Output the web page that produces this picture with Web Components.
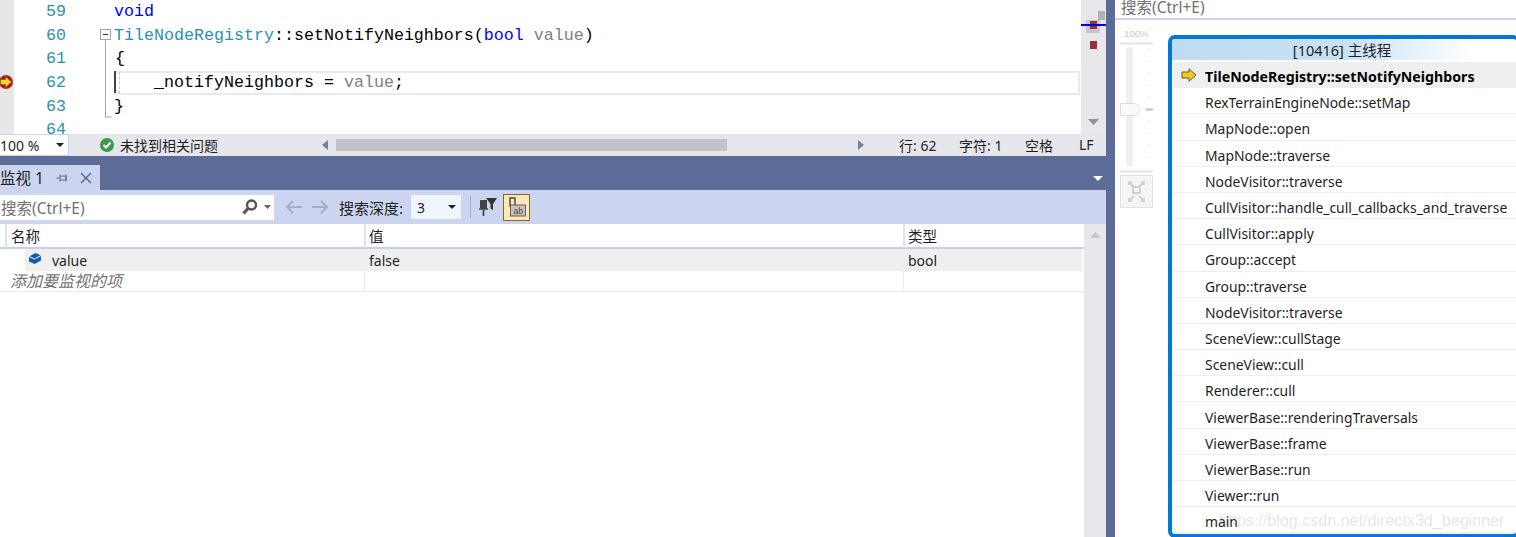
<!DOCTYPE html>
<html lang="zh"><head><meta charset="utf-8"><title>VS</title>
<style>
html,body{margin:0;padding:0;width:1516px;height:537px;overflow:hidden;background:#fff;font:14px "Noto Sans","Noto Sans CJK SC",sans-serif;color:#1e1e1e}
</style></head><body>
<vs-app></vs-app>
<script>
const def=(name,html)=>customElements.define(name,class extends HTMLElement{constructor(){super();this.attachShadow({mode:'open'}).innerHTML=html}});
const UI='"Noto Sans","Noto Sans CJK SC",sans-serif';

def('vs-editor',`<style>
:host{display:flex;height:134px;overflow:hidden;background:#fff;position:relative}
.bp{width:14px;background:#e6e7e8;flex:none;display:grid;grid-template-rows:repeat(6,23.7px)}
.bp svg{grid-row:4;margin:3px 0 0 -1px}
.nums{width:52px;flex:none;text-align:right;font:16.67px/23.6px "Liberation Mono",monospace;color:#2b91af;padding-top:.3px}
.out{width:48px;flex:none;display:flex;justify-content:flex-end}
.code{flex:1;font:16.67px/23.6px "Liberation Mono",monospace;color:#000;white-space:pre;min-width:0;padding-top:.3px}
.l{height:23.6px}
.k{color:#00f}.t{color:#2b91af}.p{color:#808080}
.cur{position:absolute;left:114px;top:71px;width:964px;height:20px;border:2px solid #e9e9f4;border-left:none;}
.caret{position:absolute;left:114px;top:71px;width:2px;height:22px;background:#444}
.guide{position:absolute;left:119px;top:72px;height:22px;border-left:1px dashed #ccc}
.sb{width:25px;flex:none;background:#e8e8ec;position:relative}
.mark{position:absolute}
</style>
<div class="bp"><svg width="16" height="16" viewBox="0 0 16 16"><circle cx="7" cy="8" r="7" fill="#c8261c"/><circle cx="7" cy="8" r="6" fill="#a81c14"/><path d="M1.5 5.5h5V2.6L12.5 8l-6 5.4v-2.9h-5z" fill="#fbd33f" stroke="#6b5a14" stroke-width=".6"/></svg></div>
<div class="nums"><div>59</div><div>60</div><div>61</div><div>62</div><div>63</div><div>64</div></div>
<div class="out"><svg width="14" height="134" viewBox="0 0 14 134"><rect x=".5" y="29.5" width="10" height="10" fill="#fff" stroke="#a5a5a5"/><path d="M3 34.5h5" stroke="#333"/><path d="M5.5 40v77h6" fill="none" stroke="#a5a5a5"/></svg></div>
<div class="code"><div class="l"><span class="k">void</span></div><div class="l"><span class="t">TileNodeRegistry</span>::setNotifyNeighbors(<span class="k">bool</span> <span class="p">value</span>)</div><div class="l" style="padding-left:1px">{</div><div class="l">    _notifyNeighbors = <span class="p">value</span>;</div><div class="l">}</div></div>
<div class="cur"></div><div class="caret"></div><div class="guide"></div>
<div class="sb">
<div class="mark" style="left:17px;top:11px;width:7px;height:9px;background:#b0b0b4"></div>
<div class="mark" style="left:5px;top:20px;width:14px;height:13px;background:#c8c8cc"></div>
<div class="mark" style="left:9px;top:21px;width:7px;height:8px;background:#9b2d3e"></div>
<div class="mark" style="left:0;top:24px;width:25px;height:2px;background:#0000c8"></div>
<div class="mark" style="left:9px;top:41px;width:7px;height:8px;background:#9b2d3e"></div>
<svg class="mark" style="left:7px;top:119px" width="11" height="7"><path d="M0 0h11L5.5 6z" fill="#8f90a0"/></svg>
</div>`);

def('vs-status',`<style>
:host{display:flex;align-items:center;height:22px;background:#e6e7ed;font:14px ${UI};color:#1e1e1e;white-space:nowrap}
.zoom{box-sizing:border-box;width:69px;height:22px;background:#fff;border:1px solid #c8d3ee;border-left:none;display:flex;align-items:center;justify-content:space-between;padding-right:4px;font-size:14px}
.chk{margin-left:30px;flex:none}
.msg{margin-left:5px;width:98px;font-size:14px}
.track{width:391px;height:12px;background:#c2c3c9;margin:0 0 0 8px;flex:none}
.arr{flex:none}
.cells{flex:1;display:grid;grid-template-columns:60px 66px 54px auto;padding-left:35px}
</style>
<div class="zoom"><span>100 %</span><svg width="8" height="4"><path d="M0 0h8L4 4z" fill="#222"/></svg></div>
<svg class="chk" width="16" height="16"><circle cx="8" cy="8" r="7" fill="#3a9b4a"/><path d="M4.5 8l2.5 2.5 4.5-5" fill="none" stroke="#fff" stroke-width="2"/></svg>
<span class="msg">未找到相关问题</span>
<svg class="arr" style="margin-left:104px" width="6" height="10"><path d="M6 0v10L0 5z" fill="#7d7e8e"/></svg>
<div class="track"></div>
<svg class="arr" style="margin-left:131px" width="6" height="10"><path d="M0 0v10l6-5z" fill="#7d7e8e"/></svg>
<div class="cells"><span>行: 62</span><span>字符: 1</span><span>空格</span><span>LF</span></div>`);

def('vs-tabbar',`<style>
:host{display:flex;align-items:flex-end;height:34px;background:#5d6b99;position:relative}
.tab{display:flex;align-items:center;box-sizing:border-box;width:100px;height:25px;background:#ccd5f0;font:15.5px ${UI};color:#1e1e1e;white-space:nowrap}
.tab svg{flex:none}
.drop{position:absolute;right:3px;top:20px}
</style>
<div class="tab"><span style="width:56px">监视 1</span>
<svg width="12" height="12" viewBox="0 0 12 12"><path d="M4 2.500v7M4 4h6v4H4M0.500 6H4M10 2.500v7" fill="none" stroke="#5d6b99"/></svg>
<svg style="margin-left:12px" width="12" height="12" viewBox="0 0 12 12"><path d="M1 1l10 10M11 1L1 11" stroke="#5d6b99" stroke-width="1.5"/></svg></div>
<svg class="drop" width="10" height="5"><path d="M0 0h10L5 5z" fill="#fff"/></svg>`);

def('vs-toolbar',`<style>
:host{display:flex;align-items:center;height:34px;background:#ccd5f0;font:15px ${UI};color:#1e1e1e;white-space:nowrap}
.search{box-sizing:border-box;width:275px;height:27px;background:#fff;border:1px solid #d4dcef;border-left:none;display:flex;align-items:center;color:#717171;padding-left:1px;font-size:15.500px}
.search span{flex:1}
.sel{box-sizing:border-box;width:50px;height:24px;background:#f0f4fd;margin-left:8px;display:flex;align-items:center;justify-content:space-between;padding:0 5px 0 6px;font-size:14px}
.sep{width:1px;height:22px;background:#a9b3cc;margin:0 0 0 9px}
.tog{box-sizing:border-box;width:27px;height:27px;background:#fde8bd;border:1px solid #8b6a1d;display:grid;place-items:center;margin-left:5px}
</style>
<div class="search"><span>搜索(Ctrl+E)</span>
<svg width="18" height="18" viewBox="0 0 18 18"><circle cx="10.5" cy="7" r="4.5" fill="none" stroke="#555" stroke-width="2.4"/><path d="M7 10.5l-4.5 5" stroke="#555" stroke-width="3.2"/></svg>
<svg style="margin:0 3px 0 5px" width="7" height="4"><path d="M0 0h7L3.5 4z" fill="#666"/></svg></div>
<svg style="margin-left:9px" width="20" height="16" viewBox="0 0 20 16"><path d="M18 8H3M9 2L3 8l6 6" fill="none" stroke="#a5adc0" stroke-width="2"/></svg>
<svg style="margin-left:6px" width="20" height="16" viewBox="0 0 20 16"><path d="M2 8h15M11 2l6 6-6 6" fill="none" stroke="#a5adc0" stroke-width="2"/></svg>
<span style="margin-left:9px;width:64px">搜索深度:</span>
<div class="sel"><span>3</span><svg width="8" height="4"><path d="M0 0h8L4 4z" fill="#222"/></svg></div>
<div class="sep"></div>
<svg style="margin-left:8px" width="19" height="20" viewBox="0 0 19 20"><path d="M1 3h7v9H1z" fill="#444"/><path d="M0 12h9" stroke="#444" stroke-width="1.5"/><path d="M4.500 12v7" stroke="#444" stroke-width="1.800"/><path d="M7 1h11l-4 6v6l-2.500-1.500V7z" fill="#333"/></svg>
<div class="tog"><svg width="20" height="21" viewBox="0 0 20 21"><path d="M3 1h5v8H3zM5.500 9v5" fill="none" stroke="#4a4a4a" stroke-width="1.500"/><rect x="3.500" y="8" width="15" height="11" fill="#c9c4b6" stroke="#5d5d5d"/><text x="6.500" y="16.500" font-family="Liberation Sans" font-size="8.500" fill="#444">ab</text></svg></div>`);

def('vs-watch-row',`<style>
:host{display:grid;grid-template-columns:364px 539px 1fr;font:14px ${UI};color:#1e1e1e;white-space:nowrap;box-sizing:border-box}
:host([kind=head]){height:25px;background:#fff;border-bottom:2px solid #c4cfec;line-height:24px;font-size:14.5px}
:host([kind=value]){height:22px;line-height:23px;background:linear-gradient(90deg,#fff 25px,#efefef 25px,#efefef 1082px,#fff 1082px)}
:host([kind=add]){height:21px;line-height:21px;border-bottom:1px solid #eaeaea}
div{box-sizing:border-box;min-width:0;padding-left:5px}
:host([kind=head]) div{border-left:2px solid #dde3f2}
:host([kind=head]) .a{margin-left:5px;padding-left:4px}
:host([kind=head]) .b{padding-left:3px}
:host([kind=head]) .c{padding-left:3px}
:host([kind=add]) .b,:host([kind=add]) .c{border-left:1px solid #eaeaea}
:host([kind=add]) .a{padding-left:10px;color:#717171;font-style:italic;font-size:16px}
.a{display:flex;align-items:center}
</style><div class="a"><slot name="a"></slot></div><div class="b"><slot name="b"></slot></div><div class="c"><slot name="c"></slot></div>`);

def('vs-watch',`<style>
:host{display:flex;height:313px;background:#fff}
.t{flex:1;min-width:0}
.sb{width:22px;flex:none;background:#e8e8ec;display:flex;justify-content:center;padding-top:7px;box-sizing:border-box}
</style>
<div class="t"><slot></slot></div>
<div class="sb"><svg width="11" height="7"><path d="M0 7h11L5.500 1z" fill="#c5c6cf"/></svg></div>`);

def('vs-thread',`<style>
:host{display:block;box-sizing:border-box;width:352px;height:503px;border:4px solid #0078d7;border-radius:7px;background:#fff;overflow:hidden;flex:none;margin-right:-4px;position:relative}
.title{height:21px;text-align:center;background:linear-gradient(90deg,#c0dcf3,#c8e1f5 50%,#fff 88%);font:14.5px/23px ${UI};color:#1e1e1e;padding-right:4px}
.rows{margin:2px 0 0 1px}
.wm{position:absolute;left:47px;top:472px;white-space:nowrap;font:16.1px "Liberation Sans",sans-serif;color:rgba(120,120,120,.2)}
</style>
<div class="title">[10416] 主线程</div><div class="rows"><slot></slot></div>
<div class="wm">https://blog.csdn.net/directx3d_beginner</div>`);

def('vs-frame',`<style>
:host{display:flex;align-items:center;height:26.2px;box-sizing:border-box;border-bottom:1px solid #eceef0;font:13.9px ${UI};color:#1e1e1e;padding:4px 0 0 32px;white-space:nowrap;position:relative}
:host([current]){background:#efefef;font-weight:700;font-size:14.2px;border-bottom:none;color:#000;padding-top:2px}
svg{position:absolute;left:8px;top:6px;display:none}
:host([current]) svg{display:block}
</style><svg width="16" height="14" viewBox="0 0 16 14"><path d="M1 4h7V.800L15 7l-7 6.200V10H1z" fill="#f4c828" stroke="#6b5c18"/></svg><slot></slot>`);

def('vs-slider',`<style>
:host{display:block;width:33px;flex:none;margin:10px 0 0 5px}
svg{display:block}
</style><svg width="33" height="190" viewBox="0 0 33 190">
<text x="16.500" y="7" text-anchor="middle" font-family="Liberation Sans" font-size="9.500" fill="#c9c9c9">100%</text>
<path d="M0 13.500h33" stroke="#e4e4e4" stroke-width="2"/>
<rect x="7" y="18" width="5" height="117" fill="#f0f0f0" stroke="#e8e8e8"/>
<path d="M27 19h4M27 31h4M27 43h4M27 55h4M27 67h4M27 91h4M27 103h4M27 115h4M27 127h4" stroke="#eee"/>
<path d="M0.500 73.500h15l5 6-5 6h-15z" fill="#fafafa" stroke="#dcdcdc"/>
<rect x="26" y="78" width="7" height="3" fill="#d0d0d0"/>
<path d="M0 141.500h33" stroke="#e4e4e4" stroke-width="2"/>
<rect x=".5" y="145.500" width="32" height="32" fill="#f5f5f5" stroke="#e2e2e2"/>
<path d="M9 155v-3h3M24 155v-3h-3M9 168v3h3M24 168v3h-3M10 153l4 4M23 153l-4 4M10 170l4-4M23 170l-4-4M13 157h7v6h-7z" fill="none" stroke="#d0d0d0" stroke-width="1.800"/>
</svg>`);

def('vs-stackpane',`<style>
:host{display:flex;flex-direction:column;flex:1;min-width:0;background:#fff;overflow:hidden}
.s{box-sizing:border-box;height:20px;border-bottom:2px solid #c9d3ec;font:15.5px/14px ${UI};color:#717171;padding-left:6px;white-space:nowrap;overflow:hidden;flex:none}
.b{display:flex;flex:1;align-items:flex-start;gap:15px}
.w{margin-top:15px;display:block}
</style><div class="s">搜索(Ctrl+E)</div><div class="b"><vs-slider></vs-slider><div class="w"><slot></slot></div></div>`);

def('vs-app',`<style>
:host{display:flex;width:1516px;height:537px;overflow:hidden}
.left{width:1106px;flex:none;display:flex;flex-direction:column}
.split{width:9px;background:#5d6b99;flex:none}
</style>
<div class="left"><vs-editor></vs-editor><vs-status></vs-status><vs-tabbar></vs-tabbar><vs-toolbar></vs-toolbar>
<vs-watch>
<vs-watch-row kind="head"><span slot="a">名称</span><span slot="b">值</span><span slot="c">类型</span></vs-watch-row>
<vs-watch-row kind="value"><span slot="a" style="display:flex;align-items:center;margin-left:23px"><svg width="14" height="14" viewBox="0 0 14 14" style="margin-top:-4px"><path d="M1 4.500L7.500 1 13 3.500v5L6.500 12 1 9.500z" fill="#0e5ea8"/><path d="M1 4.500L6.500 7 13 3.500" fill="none" stroke="#fff"/></svg><span style="margin-left:10px">value</span></span><span slot="b">false</span><span slot="c">bool</span></vs-watch-row>
<vs-watch-row kind="add"><span slot="a">添加要监视的项</span></vs-watch-row>
</vs-watch></div>
<div class="split"></div>
<vs-stackpane><vs-thread>
<vs-frame current>TileNodeRegistry::setNotifyNeighbors</vs-frame>
<vs-frame>RexTerrainEngineNode::setMap</vs-frame>
<vs-frame>MapNode::open</vs-frame>
<vs-frame>MapNode::traverse</vs-frame>
<vs-frame>NodeVisitor::traverse</vs-frame>
<vs-frame>CullVisitor::handle_cull_callbacks_and_traverse</vs-frame>
<vs-frame>CullVisitor::apply</vs-frame>
<vs-frame>Group::accept</vs-frame>
<vs-frame>Group::traverse</vs-frame>
<vs-frame>NodeVisitor::traverse</vs-frame>
<vs-frame>SceneView::cullStage</vs-frame>
<vs-frame>SceneView::cull</vs-frame>
<vs-frame>Renderer::cull</vs-frame>
<vs-frame>ViewerBase::renderingTraversals</vs-frame>
<vs-frame>ViewerBase::frame</vs-frame>
<vs-frame>ViewerBase::run</vs-frame>
<vs-frame>Viewer::run</vs-frame>
<vs-frame>main</vs-frame>
</vs-thread></vs-stackpane>`);
</script>
</body></html>
